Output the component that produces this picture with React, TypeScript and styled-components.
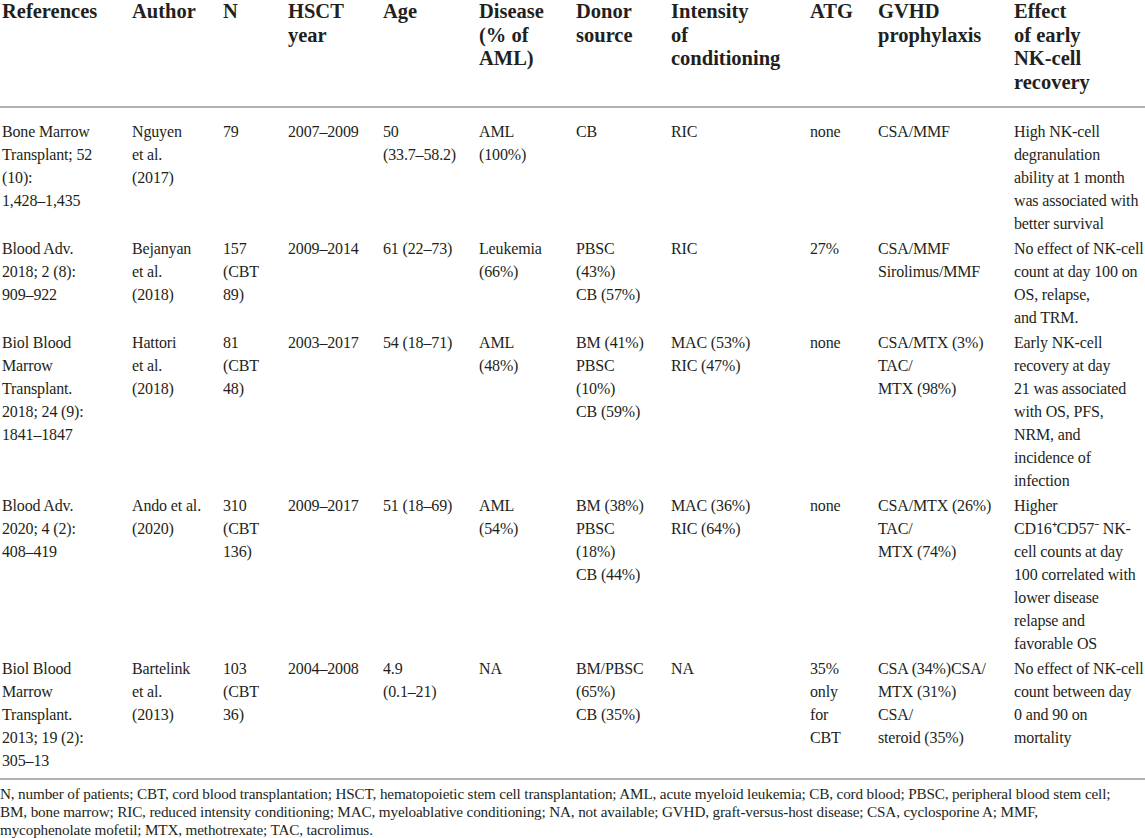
import styled, { createGlobalStyle } from 'styled-components';

const GlobalStyle = createGlobalStyle`
  html, body {
    margin: 0;
    padding: 0;
    background: #ffffff;
  }
  body {
    font-family: 'Liberation Serif', 'Times New Roman', serif;
    color: #231f20;
  }
`;

const COLUMNS = '130px 91px 65px 95px 96px 97px 95px 139px 68px 136px 131px';

const Page = styled.div`
  width: 1145px;
  height: 838px;
  overflow: hidden;
  background: #fff;
`;

const Table = styled.div`
  display: flex;
  flex-direction: column;
`;

const Row = styled.div<{ $head?: boolean }>`
  display: grid;
  grid-template-columns: ${COLUMNS};
  padding-left: 2px;
  padding-bottom: ${(p) => (p.$head ? '12px' : '2px')};
  font-size: ${(p) => (p.$head ? '20.5px' : '16px')};
  font-weight: ${(p) => (p.$head ? 700 : 400)};
  line-height: ${(p) => (p.$head ? '23.5px' : '23px')};
  letter-spacing: ${(p) => (p.$head ? '0' : '-0.15px')};
`;

const Body = styled.div`
  display: flex;
  flex-direction: column;
  padding: 12px 0 4px;
  border-top: 2px solid #b3b3b3;
  border-bottom: 2px solid #b3b3b3;
`;

const Cell = styled.div`
  white-space: nowrap;
`;

const Line = styled.span`
  display: block;
`;

const Notes = styled.div`
  padding-top: 5px;
  font-size: 15.2px;
  line-height: 18px;
  letter-spacing: -0.15px;
  white-space: nowrap;
`;

type Lines = string[];

const header: Lines[] = [
  ['References'],
  ['Author'],
  ['N'],
  ['HSCT', 'year'],
  ['Age'],
  ['Disease', '(% of', 'AML)'],
  ['Donor', 'source'],
  ['Intensity', 'of', 'conditioning'],
  ['ATG'],
  ['GVHD', 'prophylaxis'],
  ['Effect', 'of early', 'NK-cell', 'recovery'],
];

const rows: Lines[][] = [
  [
    ['Bone Marrow', 'Transplant; 52', '(10):', '1,428–1,435'],
    ['Nguyen', 'et al.', '(2017)'],
    ['79'],
    ['2007–2009'],
    ['50', '(33.7–58.2)'],
    ['AML', '(100%)'],
    ['CB'],
    ['RIC'],
    ['none'],
    ['CSA/MMF'],
    ['High NK-cell', 'degranulation', 'ability at 1 month', 'was associated with', 'better survival'],
  ],
  [
    ['Blood Adv.', '2018; 2 (8):', '909–922'],
    ['Bejanyan', 'et al.', '(2018)'],
    ['157', '(CBT', '89)'],
    ['2009–2014'],
    ['61 (22–73)'],
    ['Leukemia', '(66%)'],
    ['PBSC', '(43%)', 'CB (57%)'],
    ['RIC'],
    ['27%'],
    ['CSA/MMF', 'Sirolimus/MMF'],
    ['No effect of NK-cell', 'count at day 100 on', 'OS, relapse,', 'and TRM.'],
  ],
  [
    ['Biol Blood', 'Marrow', 'Transplant.', '2018; 24 (9):', '1841–1847'],
    ['Hattori', 'et al.', '(2018)'],
    ['81', '(CBT', '48)'],
    ['2003–2017'],
    ['54 (18–71)'],
    ['AML', '(48%)'],
    ['BM (41%)', 'PBSC', '(10%)', 'CB (59%)'],
    ['MAC (53%)', 'RIC (47%)'],
    ['none'],
    ['CSA/MTX (3%)', 'TAC/', 'MTX (98%)'],
    ['Early NK-cell', 'recovery at day', '21 was associated', 'with OS, PFS,', 'NRM, and', 'incidence of', 'infection'],
  ],
  [
    ['Blood Adv.', '2020; 4 (2):', '408–419'],
    ['Ando et al.', '(2020)'],
    ['310', '(CBT', '136)'],
    ['2009–2017'],
    ['51 (18–69)'],
    ['AML', '(54%)'],
    ['BM (38%)', 'PBSC', '(18%)', 'CB (44%)'],
    ['MAC (36%)', 'RIC (64%)'],
    ['none'],
    ['CSA/MTX (26%)', 'TAC/', 'MTX (74%)'],
    ['Higher', 'CD16⁺CD57⁻ NK-', 'cell counts at day', '100 correlated with', 'lower disease', 'relapse and', 'favorable OS'],
  ],
  [
    ['Biol Blood', 'Marrow', 'Transplant.', '2013; 19 (2):', '305–13'],
    ['Bartelink', 'et al.', '(2013)'],
    ['103', '(CBT', '36)'],
    ['2004–2008'],
    ['4.9', '(0.1–21)'],
    ['NA'],
    ['BM/PBSC', '(65%)', 'CB (35%)'],
    ['NA'],
    ['35%', 'only', 'for', 'CBT'],
    ['CSA (34%)CSA/', 'MTX (31%)', 'CSA/', 'steroid (35%)'],
    ['No effect of NK-cell', 'count between day', '0 and 90 on', 'mortality'],
  ],
];

const notes = [
  'N, number of patients; CBT, cord blood transplantation; HSCT, hematopoietic stem cell transplantation; AML, acute myeloid leukemia; CB, cord blood; PBSC, peripheral blood stem cell;',
  'BM, bone marrow; RIC, reduced intensity conditioning; MAC, myeloablative conditioning; NA, not available; GVHD, graft-versus-host disease; CSA, cyclosporine A; MMF,',
  'mycophenolate mofetil; MTX, methotrexate; TAC, tacrolimus.',
];

const CellLines = ({ lines }: { lines: Lines }) => (
  <Cell>
    {lines.map((l, i) => (
      <Line key={i}>{l}</Line>
    ))}
  </Cell>
);

const App = () => (
  <Page>
    <GlobalStyle />
    <Table>
      <Row $head>
        {header.map((c, i) => (
          <CellLines key={i} lines={c} />
        ))}
      </Row>
      <Body>
        {rows.map((r, i) => (
          <Row key={i}>
            {r.map((c, j) => (
              <CellLines key={j} lines={c} />
            ))}
          </Row>
        ))}
      </Body>
    </Table>
    <Notes>
      {notes.map((n, i) => (
        <Line key={i}>{n}</Line>
      ))}
    </Notes>
  </Page>
);

export default App;
